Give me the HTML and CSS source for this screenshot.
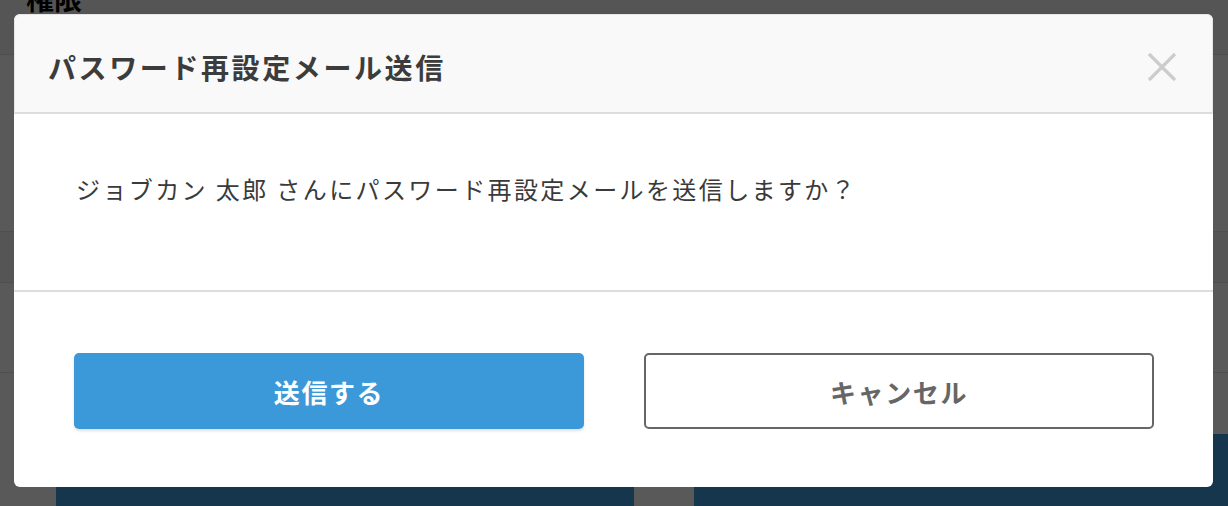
FILE: index.html
```html
<!DOCTYPE html>
<html lang="ja">
<head>
<meta charset="utf-8">
<title>パスワード再設定メール送信</title>
<link rel="stylesheet" href="styles.css">
</head>
<body>
<div class="page">
  <div class="page-head"><h1 class="page-title">権限</h1></div>
  <div class="page-row tall"></div>
  <div class="page-row shade"></div>
  <div class="page-row mid"></div>
  <div class="page-row low"></div>
  <div class="page-actions">
    <div class="page-btn left"></div>
    <div class="page-btn right"></div>
  </div>
</div>
<div class="backdrop"></div>
<div class="modal" role="dialog">
  <div class="modal-header">
    <h2 class="modal-title">パスワード再設定メール送信</h2>
    <button class="close" aria-label="閉じる">
      <svg width="30" height="30" viewBox="0 0 30 30"><path d="M2 2 L28 28 M28 2 L2 28" stroke="#cccccc" stroke-width="3.2" stroke-linecap="butt" fill="none"/></svg>
    </button>
  </div>
  <div class="modal-body">
    <p class="message">ジョブカン 太郎 さんにパスワード再設定メールを送信しますか？</p>
  </div>
  <div class="modal-footer">
    <button class="btn btn-primary">送信する</button>
    <button class="btn btn-outline">キャンセル</button>
  </div>
</div>
</body>
</html>
```
FILE: styles.css
```css
* { box-sizing: border-box; }
html, body { margin: 0; padding: 0; }
body {
  width: 1228px;
  height: 506px;
  overflow: hidden;
  background: #ffffff;
  font-family: "Noto Sans CJK JP", "Noto Sans", sans-serif;
  position: relative;
}
.page { width: 1228px; }
.page-head {
  height: 55px;
  background: #f2f2f2;
  border-bottom: 1px solid #e0e0e0;
  padding-left: 26px;
  overflow: hidden;
}
.page-title {
  margin: -22px 0 0 0;
  font-size: 28px;
  line-height: 40px;
  font-weight: 700;
  color: #000;
}
.page-row { border-bottom: 1px solid #e3e3e3; }
.page-row.tall { height: 177px; }
.page-row.shade { height: 51px; background: #f3f3f3; }
.page-row.mid { height: 90px; }
.page-row.low { height: 61px; border-bottom: none; }
.page-actions {
  display: flex;
  padding-left: 56px;
  gap: 60px;
}
.page-btn { height: 80px; background: #3f9adc; }
.page-btn.left { width: 578px; }
.page-btn.right { flex: 1; }
.backdrop {
  position: absolute;
  inset: 0;
  background: rgba(0, 0, 0, 0.65);
}
.modal {
  position: absolute;
  left: 14px;
  top: 14px;
  width: 1199px;
  height: 473px;
  background: #fff;
  border-radius: 6px;
  overflow: hidden;
  display: flex;
  flex-direction: column;
}
.modal-header {
  height: 100px;
  background: #f9f9f9;
  border: 1px solid #e6e6e6;
  border-bottom: 2px solid #dddddd;
  border-radius: 6px 6px 0 0;
  display: flex;
  align-items: center;
  justify-content: space-between;
  padding: 6px 35px 0 33px;
}
.modal-title {
  margin: 0;
  font-size: 28px;
  font-weight: 700;
  color: #3c3c3c;
  letter-spacing: 2.6px;
}
.close {
  border: 0;
  background: none;
  padding: 0;
  width: 30px;
  height: 30px;
  display: flex;
}
.modal-body {
  height: 178px;
  border-bottom: 2px solid #dddddd;
  padding: 57px 62px 0;
}
.message {
  margin: 0;
  font-size: 24px;
  line-height: 36px;
  color: #3a3a3a;
  letter-spacing: 2.4px;
}
.modal-footer {
  flex: 1;
  display: flex;
  gap: 60px;
  padding: 61px 59px 0 60px;
}
.btn {
  flex: 0 0 510px;
  height: 76px;
  border-radius: 5px;
  font-family: inherit;
  font-size: 26px;
  font-weight: 700;
  letter-spacing: 1.6px;
}
.btn-primary {
  background: #3b99d9;
  color: #fff;
  border: 0;
  box-shadow: 0 2px 3px rgba(0, 0, 0, 0.12);
}
.btn-outline {
  background: #fff;
  color: #666;
  border: 2px solid #666;
}
```
